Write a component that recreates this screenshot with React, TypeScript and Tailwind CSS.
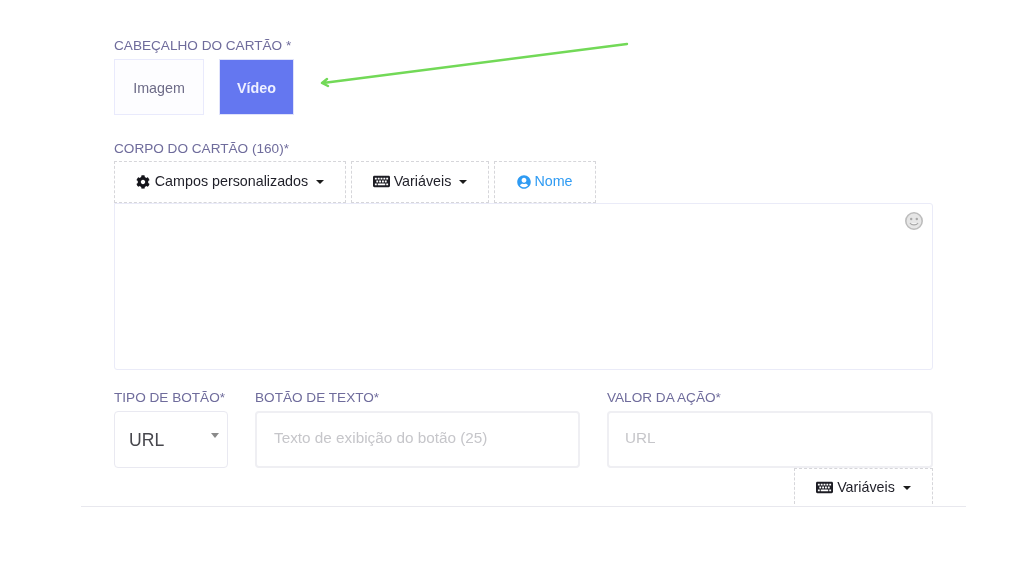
import { FaCog, FaKeyboard, FaUserCircle } from "react-icons/fa";

const font = { fontFamily: '"Liberation Sans", Arial, sans-serif' };

function Label({ children, className = "" }: { children: React.ReactNode; className?: string }) {
  return (
    <div className={`h-5 text-[13.6px] leading-[22px] text-[#6f6c9c] ${className}`}>{children}</div>
  );
}

function Caret() {
  return <span className="ml-2 inline-block h-0 w-0 border-x-[4px] border-t-[4px] border-x-transparent border-t-[#1c1c1c]" />;
}

function ToolButton({ className, children }: { className: string; children: React.ReactNode }) {
  return (
    <div className={`flex h-[42px] items-center justify-center border border-dashed border-[#d6d6da] pb-[1px] text-[14.3px] text-[#1f1f28] ${className}`}>
      {children}
    </div>
  );
}

function Smiley() {
  return (
    <svg width="20" height="20" viewBox="0 0 20 20" className="absolute right-[8px] top-[7px]">
      <circle cx="10" cy="10" r="8.2" fill="#e6e6e6" stroke="#bdbdbd" strokeWidth="1.6" />
      <circle cx="7.2" cy="8" r="1.2" fill="#a8a8a8" />
      <circle cx="12.8" cy="8" r="1.2" fill="#a8a8a8" />
      <path d="M6 12 C7.5 14.6 12.5 14.6 14 12" fill="#f4f4f4" stroke="#a8a8a8" strokeWidth="1.2" />
    </svg>
  );
}

export default function App() {
  return (
    <div className="relative h-[576px] w-[1024px] overflow-hidden bg-white blur-[0.5px]" style={font}>
      <svg className="absolute left-[315px] top-[38px]" width="320" height="54" viewBox="0 0 320 54" fill="none">
        <path d="M312 6 L8 45 M12 41 L7 45 L13 48" stroke="#72d957" strokeWidth="2.4" strokeLinecap="round" strokeLinejoin="round" />
      </svg>

      <div className="ml-[81px] h-[507px] w-[885px] border-b border-[#e8e8ee] pl-[33px] pt-[35px]">
        <div className="w-[819px]">
          <Label>CABEÇALHO DO CARTÃO *</Label>
          <div className="mt-1 flex h-14 gap-[15px] text-[14.3px]">
            <div className="flex w-[90px] items-center justify-center border border-[#e9eafc] bg-[#fdfdff] pt-[3px] text-[#6e6c88]">Imagem</div>
            <div className="flex w-[75px] items-center justify-center border border-[#dfe2fb] bg-[#6477f0] pt-[3px] font-bold text-[#eef0ff]">Vídeo</div>
          </div>

          <Label className="mt-[23px]">CORPO DO CARTÃO (160)*</Label>
          <div className="mt-[3px] flex gap-[5px]">
            <ToolButton className="w-[232px]">
              <FaCog className="mr-[5px] text-[14px] text-[#15151b]" />
              Campos personalizados
              <Caret />
            </ToolButton>
            <ToolButton className="w-[138px]">
              <FaKeyboard className="mr-[4px] text-[17px] text-[#1d1d24]" />
              Variáveis
              <Caret />
            </ToolButton>
            <ToolButton className="w-[102px] text-[#2f9bf3]">
              <FaUserCircle className="mr-[3px] text-[14px] text-[#2f9bf3]" />
              Nome
            </ToolButton>
          </div>
          <div className="relative h-[167px] rounded-b-[3px] rounded-tr-[3px] border border-[#eaebf8] bg-white">
            <Smiley />
          </div>

          <div className="mt-[17px] flex gap-[27px]">
            <div className="w-[114px]">
              <Label>TIPO DE BOTÃO*</Label>
              <div className="relative mt-1 flex h-[57px] items-center rounded border border-[#e9e9f1] pl-[14px] pt-[2px] text-[17.6px] text-[#47474d]">
                URL
                <span className="absolute right-2 top-[21px] h-0 w-0 border-x-[4px] border-t-[5px] border-x-transparent border-t-[#8a8a8a]" />
              </div>
            </div>
            <div className="w-[325px]">
              <Label>BOTÃO DE TEXTO*</Label>
              <div className="mt-1 flex h-[57px] items-center rounded border-2 border-[#efeff3] pb-[2px] pl-[17px] text-[15.3px] text-[#c6c6ca]">
                Texto de exibição do botão (25)
              </div>
            </div>
            <div className="w-[326px]">
              <Label>VALOR DA AÇÃO*</Label>
              <div className="mt-1 flex h-[57px] items-center rounded border-2 border-[#efeff3] pb-[2px] pl-[16px] text-[15.3px] text-[#c6c6ca]">
                URL
              </div>
              <div className="ml-auto flex h-[36px] w-[139px] items-center justify-center border border-b-0 border-dashed border-[#d6d6da] pt-[2px] text-[14.3px] text-[#1f1f28]">
                <FaKeyboard className="mr-[4px] text-[17px] text-[#1d1d24]" />
                Variáveis
                <Caret />
              </div>
            </div>
          </div>
        </div>
      </div>
    </div>
  );
}
